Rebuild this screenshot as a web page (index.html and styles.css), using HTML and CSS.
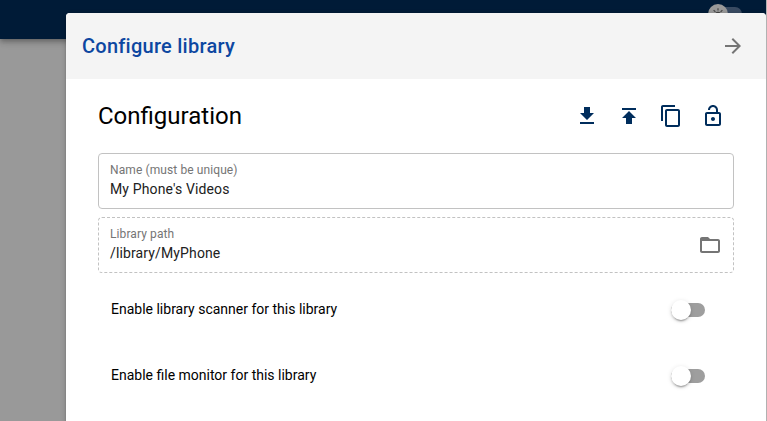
FILE: index.html
```
<!DOCTYPE html>
<html lang="en">
<head>
<meta charset="utf-8">
<title>Configure library</title>
<link rel="stylesheet" href="styles.css">
</head>
<body>
<div class="window">
<div class="backdrop">
  <div class="topbar">
    <span class="theme-track"></span>
    <span class="theme-thumb"><svg width="14" height="14" viewBox="0 0 24 24"><circle cx="12" cy="13" r="5" fill="#444"/><path d="M12 2v4M4.500 5.500l3 3M19.500 5.500l-3 3M1 13h4M19 13h4" stroke="#444" stroke-width="2"/></svg></span>
  </div>
</div>
<main class="panel">
  <header class="panel-header">
    <h1>Configure library</h1>
    <svg class="icon muted" viewBox="0 0 24 24"><path d="M12 4l-1.410 1.410L16.170 11H4v2h12.170l-5.580 5.590L12 20l8-8z"/></svg>
  </header>
  <section class="content">
    <div class="title-row">
      <h2>Configuration</h2>
      <div class="actions">
        <svg class="icon" viewBox="0 0 24 24"><path d="M5 20h14v-2H5v2zM19 9h-4V3H9v6H5l7 7 7-7z"/></svg>
        <svg class="icon" viewBox="0 0 24 24"><path d="M5 4v2h14V4H5zm0 10h4v6h6v-6h4l-7-7-7 7z"/></svg>
        <svg class="icon" viewBox="0 0 24 24"><path d="M16 1H4c-1.100 0-2 .9-2 2v14h2V3h12V1zm3 4H8c-1.100 0-2 .9-2 2v14c0 1.100.9 2 2 2h11c1.100 0 2-.9 2-2V7c0-1.100-.9-2-2-2zm0 16H8V7h11v14z"/></svg>
        <svg class="icon" viewBox="0 0 24 24"><path d="M18 8h-1V6c0-2.760-2.240-5-5-5S7 3.240 7 6h2c0-1.660 1.340-3 3-3s3 1.340 3 3v2H6c-1.100 0-2 .9-2 2v10c0 1.100.9 2 2 2h12c1.100 0 2-.9 2-2V10c0-1.100-.9-2-2-2zm0 12H6V10h12v10zm-6-3c1.100 0 2-.9 2-2s-.9-2-2-2-2 .9-2 2 .9 2 2 2z"/></svg>
      </div>
    </div>
    <div class="field">
      <div class="field-text"><span class="label">Name (must be unique)</span><span class="value">My Phone's Videos</span></div>
    </div>
    <div class="field readonly">
      <div class="field-text"><span class="label">Library path</span><span class="value">/library/MyPhone</span></div>
      <svg class="icon muted" viewBox="0 0 24 24"><path d="M20 6h-8l-2-2H4c-1.100 0-1.990.9-1.990 2L2 18c0 1.100.9 2 2 2h16c1.100 0 2-.9 2-2V8c0-1.100-.9-2-2-2zm0 12H4V8h16v10z"/></svg>
    </div>
    <div class="option"><span class="option-text">Enable library scanner for this library</span><span class="switch"><span class="thumb"></span></span></div>
    <div class="option"><span class="option-text">Enable file monitor for this library</span><span class="switch"><span class="thumb"></span></span></div>
  </section>
</main>
</div>
</body>
</html>
```
FILE: styles.css
```
* { box-sizing: border-box; }
body {
  margin: 0;
  font-family: Roboto, sans-serif;
}
.window {
  position: relative;
  display: flow-root;
  width: 767px;
  height: 421px;
  overflow: hidden;
  border-right: 1px solid #b1b1b1;
}
.backdrop { position: absolute; inset: 0; background: #999; }
.topbar {
  position: relative;
  height: 39px;
  background: #001b37;
  box-shadow: 0 2px 4px -1px rgba(0,0,0,.2), 0 4px 5px rgba(0,0,0,.14), 0 1px 10px rgba(0,0,0,.12);
}
.theme-track {
  position: absolute;
  left: 710px;
  top: 7px;
  width: 32px;
  height: 14px;
  border-radius: 7px;
  background: #394b62;
}
.theme-thumb {
  position: absolute;
  left: 708px;
  top: 4px;
  width: 20px;
  height: 20px;
  border-radius: 50%;
  background: #999;
  display: flex;
  justify-content: center;
  padding-top: 3px;
}
.panel {
  position: relative;
  margin: 13px 0 0 66px;
  width: 700px;
  height: 420px;
  background: #fff;
  border-radius: 4px 4px 0 0;
  overflow: hidden;
  box-shadow: 0 1px 5px rgba(0,0,0,.2), 0 2px 2px rgba(0,0,0,.14), 0 3px 1px -2px rgba(0,0,0,.12);
}
.panel-header {
  height: 66px;
  padding: 0 21px 0 16px;
  display: flex;
  align-items: center;
  justify-content: space-between;
  background: #f4f4f4;
}
h1, h2 { margin: 0; }
h1 { font-size: 20px; line-height: 32px; font-weight: 500; letter-spacing: .25px; color: #0d47a1; }
h2 { font-size: 24px; line-height: 32px; font-weight: 400; color: #000; }
.icon { display: block; width: 24px; height: 24px; fill: #002d5c; flex: none; }
.icon.muted { fill: #757575; }
.content { padding: 0 32px; }
.title-row { height: 74px; display: flex; align-items: center; justify-content: space-between; padding-right: 9px; }
.actions { display: flex; gap: 18px; }
.field {
  height: 56px;
  margin-bottom: 8px;
  padding: 0 11px;
  border: 1px solid #c2c2c2;
  border-radius: 4px;
  display: flex;
  align-items: center;
  justify-content: space-between;
}
.field.readonly { border-style: dashed; }
.field-text { display: flex; flex-direction: column; }
.label { font-size: 12px; line-height: 16px; letter-spacing: .1px; color: #757575; }
.value { font-size: 14px; line-height: 22px; letter-spacing: .13px; color: #212121; }
.option {
  height: 66px;
  padding: 0 29px 0 13px;
  display: flex;
  align-items: center;
  justify-content: space-between;
  font-size: 14px;
  color: #000;
}
.option-text { padding-bottom: 2px; }
.field.readonly + .option { margin-top: -4px; }
.switch { width: 34px; height: 14px; border-radius: 7px; background: #9e9e9e; display: flex; align-items: center; }
.thumb {
  width: 20px;
  height: 20px;
  flex: none;
  border-radius: 50%;
  background: #fff;
  box-shadow: 0 3px 1px -2px rgba(0,0,0,.2), 0 2px 2px rgba(0,0,0,.14), 0 1px 5px rgba(0,0,0,.12);
}
```
